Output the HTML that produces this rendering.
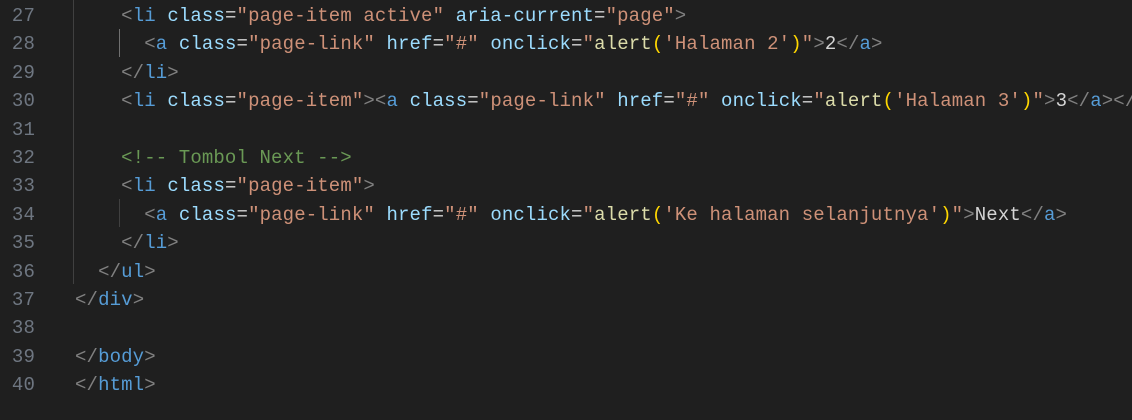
<!DOCTYPE html>
<html><head><meta charset="utf-8"><style>
body{margin:0;width:1132px;height:420px;background:#1f1f1f;overflow:hidden;position:relative;font-family:"Liberation Mono",monospace;font-size:19px;letter-spacing:0.13px}
.ln{position:absolute;left:0;width:35px;text-align:right;color:#6e7681;height:28.4px;line-height:28.4px;margin-top:2px}
.cd{position:absolute;left:75px;white-space:pre;color:#d4d4d4;height:28.4px;line-height:28.4px;margin-top:2px}
.g{position:absolute;width:1px;background:#404040}
.b{color:#808080}.t{color:#569cd6}.a{color:#9cdcfe}.s{color:#ce9178}.f{color:#dcdcaa}.y{color:#ffd700}.c{color:#6a9955}
</style></head><body>
<div class="g" style="left:73px;top:0;height:284px"></div>
<div class="g" style="left:119px;top:29px;height:28px;background:#707070"></div>
<div class="g" style="left:119px;top:199px;height:28px"></div>
<div class="ln" style="top:0">27</div><div class="cd" style="top:0">    <span class="b">&lt;</span><span class="t">li</span> <span class="a">class</span>=<span class="s">"page-item active"</span> <span class="a">aria-current</span>=<span class="s">"page"</span><span class="b">&gt;</span></div>
<div class="ln" style="top:28.4px">28</div><div class="cd" style="top:28.4px">      <span class="b">&lt;</span><span class="t">a</span> <span class="a">class</span>=<span class="s">"page-link"</span> <span class="a">href</span>=<span class="s">"#"</span> <span class="a">onclick</span>=<span class="s">"</span><span class="f">alert</span><span class="y">(</span><span class="s">'Halaman 2'</span><span class="y">)</span><span class="s">"</span><span class="b">&gt;</span>2<span class="b">&lt;/</span><span class="t">a</span><span class="b">&gt;</span></div>
<div class="ln" style="top:56.8px">29</div><div class="cd" style="top:56.8px">    <span class="b">&lt;/</span><span class="t">li</span><span class="b">&gt;</span></div>
<div class="ln" style="top:85.2px">30</div><div class="cd" style="top:85.2px">    <span class="b">&lt;</span><span class="t">li</span> <span class="a">class</span>=<span class="s">"page-item"</span><span class="b">&gt;&lt;</span><span class="t">a</span> <span class="a">class</span>=<span class="s">"page-link"</span> <span class="a">href</span>=<span class="s">"#"</span> <span class="a">onclick</span>=<span class="s">"</span><span class="f">alert</span><span class="y">(</span><span class="s">'Halaman 3'</span><span class="y">)</span><span class="s">"</span><span class="b">&gt;</span>3<span class="b">&lt;/</span><span class="t">a</span><span class="b">&gt;&lt;/</span></div>
<div class="ln" style="top:113.6px">31</div>
<div class="ln" style="top:142px">32</div><div class="cd" style="top:142px">    <span class="c">&lt;!-- Tombol Next --&gt;</span></div>
<div class="ln" style="top:170.4px">33</div><div class="cd" style="top:170.4px">    <span class="b">&lt;</span><span class="t">li</span> <span class="a">class</span>=<span class="s">"page-item"</span><span class="b">&gt;</span></div>
<div class="ln" style="top:198.8px">34</div><div class="cd" style="top:198.8px">      <span class="b">&lt;</span><span class="t">a</span> <span class="a">class</span>=<span class="s">"page-link"</span> <span class="a">href</span>=<span class="s">"#"</span> <span class="a">onclick</span>=<span class="s">"</span><span class="f">alert</span><span class="y">(</span><span class="s">'Ke halaman selanjutnya'</span><span class="y">)</span><span class="s">"</span><span class="b">&gt;</span>Next<span class="b">&lt;/</span><span class="t">a</span><span class="b">&gt;</span></div>
<div class="ln" style="top:227.2px">35</div><div class="cd" style="top:227.2px">    <span class="b">&lt;/</span><span class="t">li</span><span class="b">&gt;</span></div>
<div class="ln" style="top:255.6px">36</div><div class="cd" style="top:255.6px">  <span class="b">&lt;/</span><span class="t">ul</span><span class="b">&gt;</span></div>
<div class="ln" style="top:284px">37</div><div class="cd" style="top:284px"><span class="b">&lt;/</span><span class="t">div</span><span class="b">&gt;</span></div>
<div class="ln" style="top:312.4px">38</div>
<div class="ln" style="top:340.8px">39</div><div class="cd" style="top:340.8px"><span class="b">&lt;/</span><span class="t">body</span><span class="b">&gt;</span></div>
<div class="ln" style="top:369.2px">40</div><div class="cd" style="top:369.2px"><span class="b">&lt;/</span><span class="t">html</span><span class="b">&gt;</span></div>
</body></html>
